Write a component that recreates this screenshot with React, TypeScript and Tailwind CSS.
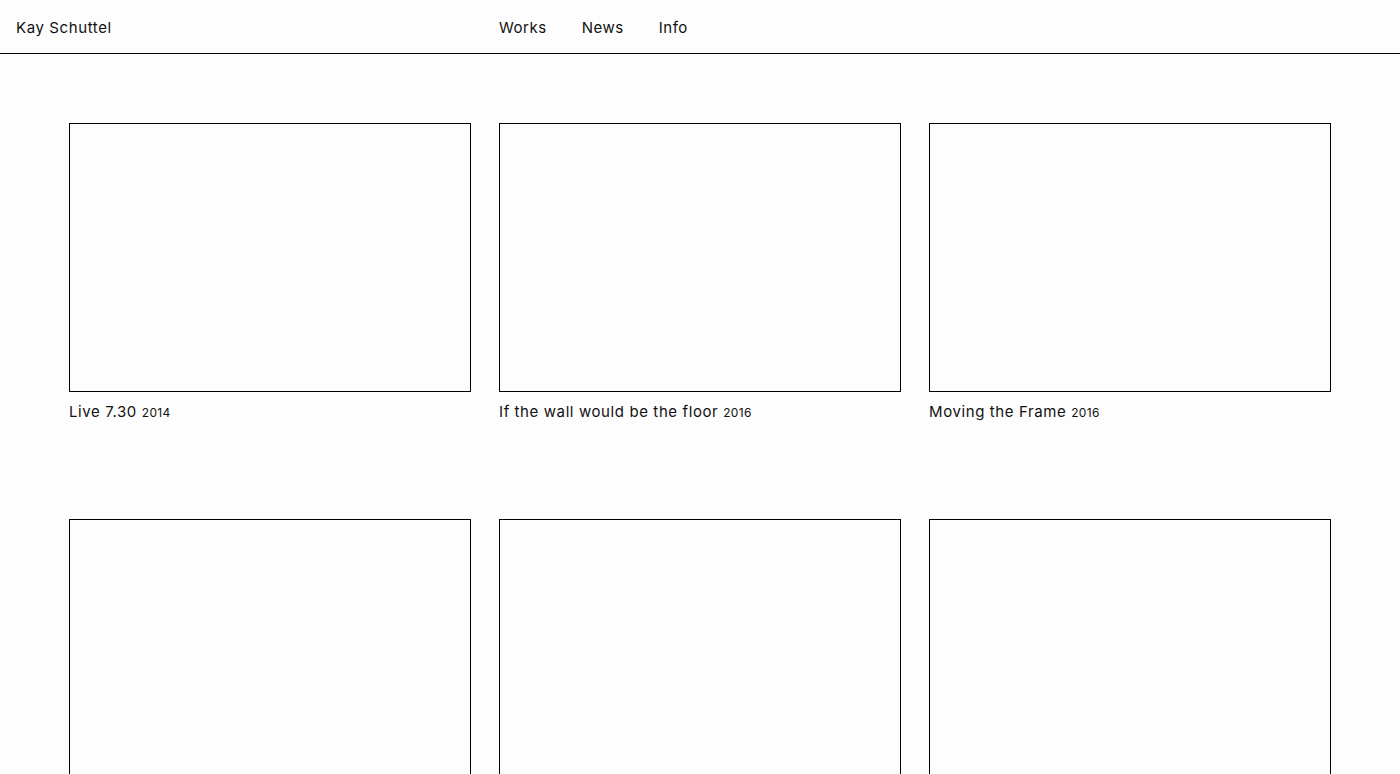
const works = [
  { title: "Live 7.30", year: "2014" },
  { title: "If the wall would be the floor", year: "2016" },
  { title: "Moving the Frame", year: "2016" },
  { title: "", year: "" },
  { title: "", year: "" },
  { title: "", year: "" },
];

export default function App() {
  return (
    <div className="min-h-screen bg-[#fdfdfd] text-[#111] font-['Inter','Liberation_Sans',sans-serif]">
      <header className="flex h-[54px] items-center border-b border-black pt-[4px]">
        <div className="w-[499px] pl-4 text-[15px] tracking-[0.04em]">Kay Schuttel</div>
        <nav className="flex gap-[35px] text-[15px] tracking-[0.035em]">
          <a>Works</a>
          <a>News</a>
          <a>Info</a>
        </nav>
      </header>

      <main className="grid grid-cols-3 gap-x-[28px] px-[69px] pt-[69px]">
        {works.map((w, i) => (
          <div key={i} className="h-[396px]">
            <div className="h-[269px] border border-black" />
            {w.title && (
              <p className="mt-[9px] text-[15px] tracking-[0.04em]">
                {w.title} <span className="text-[12px] tracking-[0.03em]">{w.year}</span>
              </p>
            )}
          </div>
        ))}
      </main>
    </div>
  );
}
